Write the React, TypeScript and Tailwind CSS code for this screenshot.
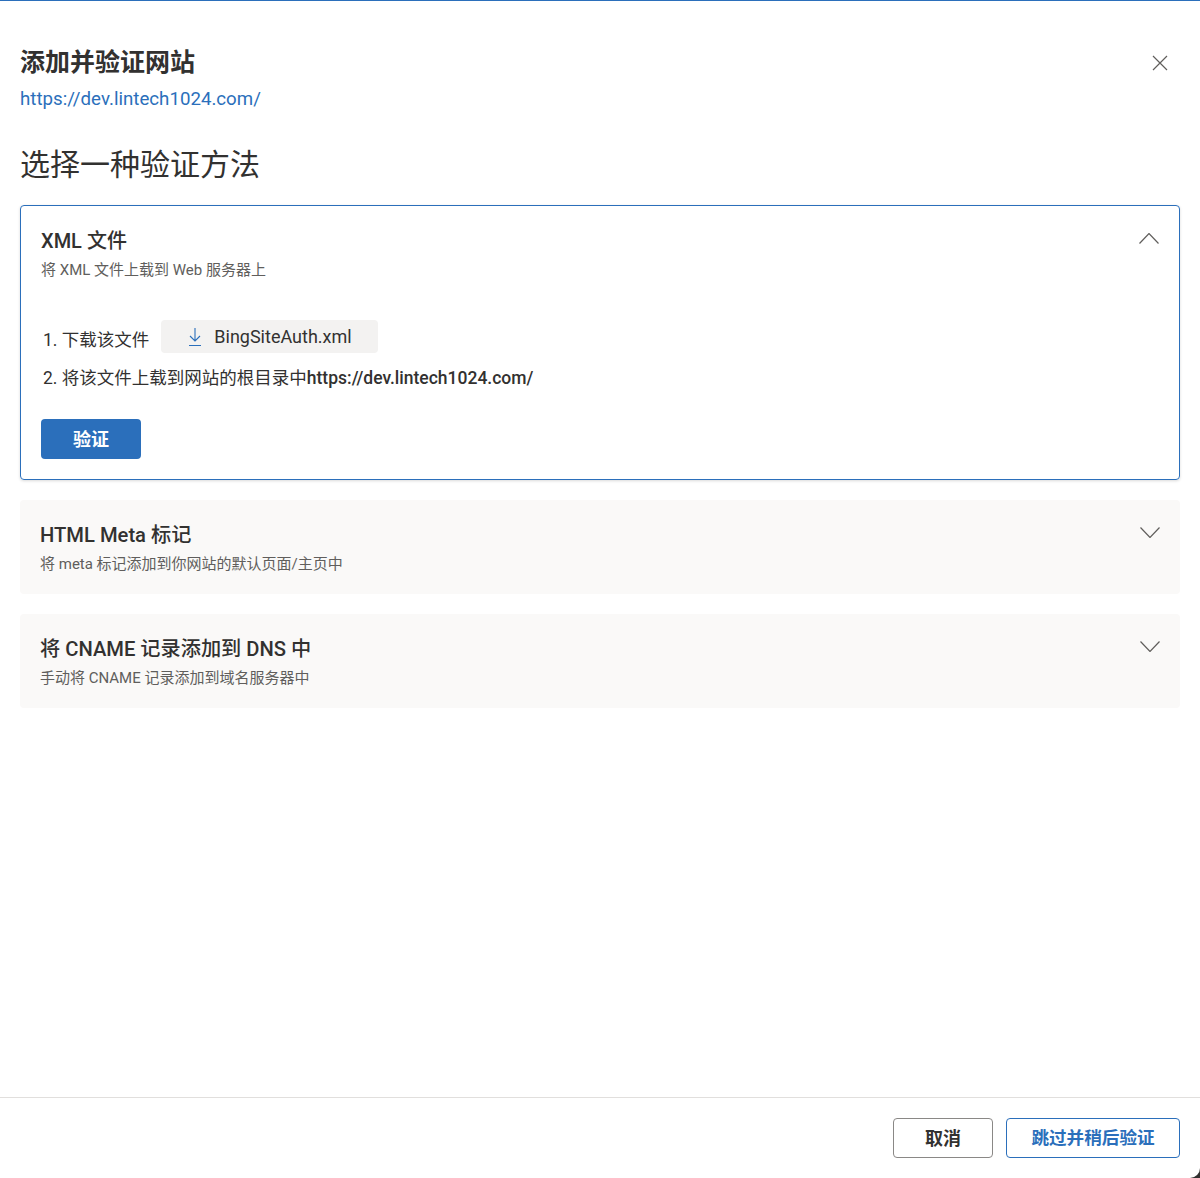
import React from 'react';

const font = "font-['Roboto','Noto_Sans_CJK_SC',sans-serif]";

const Chevron = ({ up }: { up?: boolean }) => (
  <svg width="20" height="11" viewBox="0 0 20 11" fill="none" stroke="#605e5c" strokeWidth="1.2">
    <path d={up ? 'M.5 10.5l9.5-10 9.5 10' : 'M.5.5l9.5 10 9.5-10'} />
  </svg>
);

const CollapsedCard = ({ title, desc }: { title: string; desc: string }) => (
  <div className="h-[94px] rounded bg-[#faf9f8] pl-5 pr-[20px] pt-[22px] flex justify-between">
    <div>
      <div className="text-[20.2px] leading-[26px] font-medium text-[#323130]">{title}</div>
      <div className="mt-[6px] text-[15px] leading-[20px] text-[#605e5c]">{desc}</div>
    </div>
    <div className="pt-[5px]">
      <Chevron />
    </div>
  </div>
);

export default function App() {
  return (
    <div className={`${font} w-[1200px] h-[1178px] bg-white flex flex-col border-t border-[#2b6fbb] relative`}>
      <div className="flex-1 px-5">
        <div className="flex justify-between pt-[44px]">
          <div>
            <h1 className="text-[25px] leading-[36px] font-semibold text-[#323130]">添加并验证网站</h1>
            <a className="block text-[18.7px] leading-[36px] text-[#2b6fbb]">https://dev.lintech1024.com/</a>
          </div>
          <button className="mr-[12px] mt-[10px] h-4 w-4">
            <svg width="16" height="16" viewBox="0 0 16 16" fill="none" stroke="#605e5c" strokeWidth="1.2">
              <path d="M1 1l14 14M15 1 1 15" />
            </svg>
          </button>
        </div>
        <h2 className="mt-[25px] text-[30px] leading-[46px] text-[#323130]">选择一种验证方法</h2>

        <div className="mt-[17px] h-[275px] rounded border border-[#2b6fbb] shadow-[0_1px_3px_rgba(0,0,0,0.15)] pl-5 pr-[20px] pt-[20px]">
          <div className="flex justify-between">
            <div>
              <div className="text-[20px] leading-[30px] font-medium text-[#323130]">XML 文件</div>
              <div className="mt-[4px] text-[15px] leading-[20px] text-[#605e5c]">将 XML 文件上载到 Web 服务器上</div>
            </div>
            <div className="pt-[7px]">
              <Chevron up />
            </div>
          </div>
          <div className="mt-[40px] text-[17.5px] text-[#323130]">
            <div className="flex items-center h-[33px] pl-[2px]">
              <span className="pt-[8px] leading-[27px]">1. 下载该文件</span>
              <button className="ml-[12px] flex h-[33px] w-[217px] items-center rounded-sm bg-[#f3f2f1] pl-[27px]">
                <svg width="14" height="20" viewBox="0 0 14 20" fill="none" stroke="#2b6fbb" strokeWidth="1.1">
                  <path d="M7 1v13M2 9l5 5 5-5M1 18.5h12" />
                </svg>
                <span className="ml-[12px] text-[18px] leading-[27px]">BingSiteAuth.xml</span>
              </button>
            </div>
            <div className="mt-[12px] pl-[2px] leading-[27px]">
              2. 将该文件上载到网站的根目录中<span className="font-medium">https://dev.lintech1024.com/</span>
            </div>
          </div>
          <button className="mt-[27px] h-10 w-[100px] rounded-sm bg-[#2b6fbb] text-[18px] font-semibold text-white">验证</button>
        </div>

        <div className="mt-[20px] flex flex-col gap-5">
          <CollapsedCard title="HTML Meta 标记" desc="将 meta 标记添加到你网站的默认页面/主页中" />
          <CollapsedCard title="将 CNAME 记录添加到 DNS 中" desc="手动将 CNAME 记录添加到域名服务器中" />
        </div>
      </div>

      <div className="h-[81px] border-t border-[#e1dfdd] flex justify-end gap-[13px] pr-5 pt-[20px]">
        <button className="h-10 w-[100px] rounded-sm border border-[#8a8886] text-[18px] font-semibold text-[#323130]">取消</button>
        <button className="h-10 w-[174px] rounded-sm border border-[#2b6fbb] text-[17.6px] font-semibold text-[#2b6fbb]">跳过并稍后验证</button>
      </div>
      {/* window corner showing behind the rounded dialog */}
      <div className="absolute bottom-0 right-0 h-[10px] w-[10px] bg-[#323130]">
        <div className="h-full w-full rounded-br-[10px] bg-white" />
      </div>
    </div>
  );
}
